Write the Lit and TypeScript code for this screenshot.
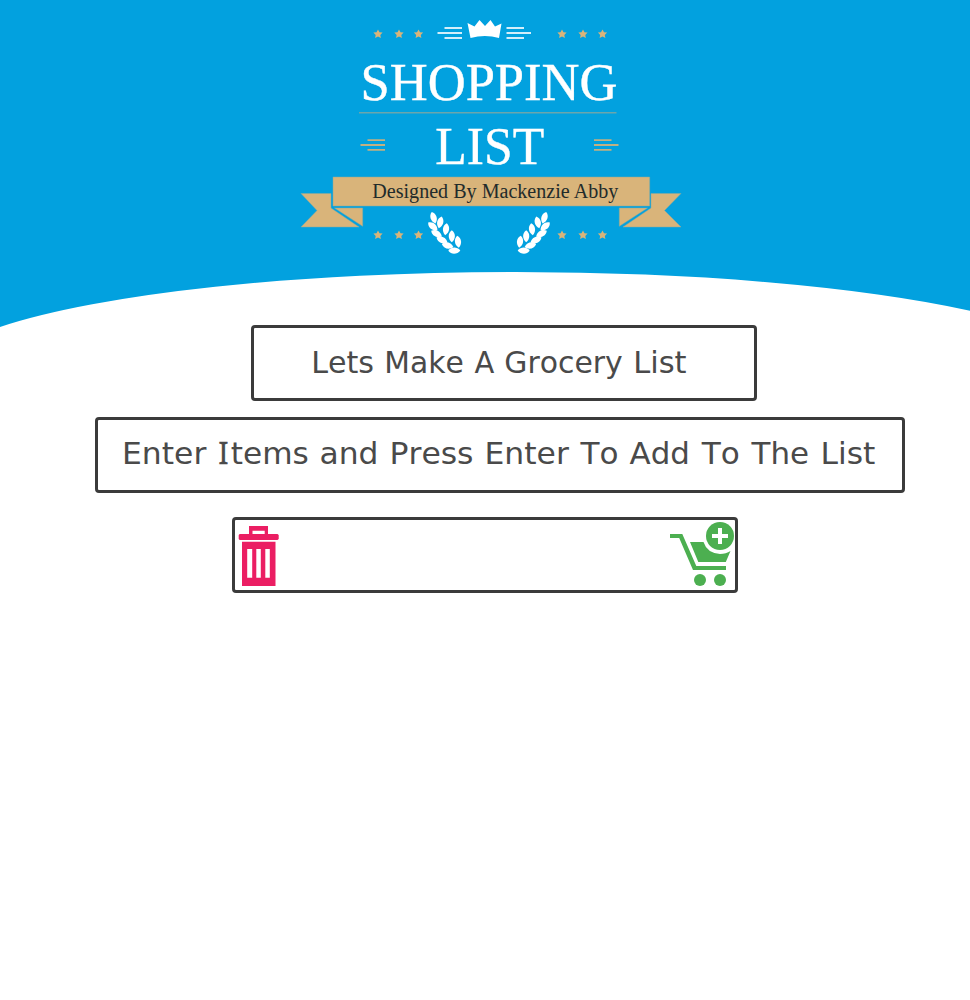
import { LitElement, html, svg, css } from "lit";
import { customElement } from "lit/decorators.js";

const star = (x: number, y: number) => svg`<path fill="#d9b47a" transform="translate(${x} ${y})"
  d="M0-4.4L1.5-1.6L4.6-1.2L2.3 1.1L2.9 4.2L0 2.8L-2.9 4.2L-2.3 1.1L-4.6-1.2L-1.5-1.6Z"/>`;
const leaf = (x: number, y: number, angle: number) => svg`<path
  transform="translate(${x} ${y}) rotate(${angle})" d="M0-6C4.2-3 4 2.8 0 6C-4 2.8-4.2-3 0-6Z"/>`;
const branch = svg`
  ${leaf(433.6, 217.8, -18)}${leaf(440.2, 222.4, 14)}${leaf(432.8, 226.4, -50)}
  ${leaf(446, 229.3, 8)}${leaf(436.5, 233.6, -62)}${leaf(451.8, 236.2, 0)}
  ${leaf(442, 240, -66)}${leaf(458, 241.8, -8)}${leaf(447.6, 245.5, -75)}
  ${leaf(454.3, 250.6, -92)}`;
const word = (text: string, x: number, y: number, width: number) => svg`<text
  x=${x} y=${y} textLength=${width} lengthAdjust="spacingAndGlyphs">${text}</text>`;

@customElement("app-root")
export class AppRoot extends LitElement {
  static styles = css`
    :host { display: block; min-height: 1000px; background: #fff; }
    svg { display: block; }
    .page { display: flex; flex-direction: column; }
    .header { height: 325px; }
    .header svg { overflow: visible; }
    .serif { font-family: "Liberation Serif", serif; }
    .box { box-sizing: border-box; height: 76px; border: 3px solid #3b3b3b; border-radius: 4px; }
    .box text { font: 30px "DejaVu Sans", sans-serif; font-kerning: none; fill: #4a4a4a; }
    .box .cap { font-family: "Noto Sans", sans-serif; font-size: 30.6px; stroke: #4a4a4a; stroke-width: 0.3px; }
    .title { width: 506px; margin-left: 251px; }
    .hint { width: 810px; margin: 16px 0 0 95px; }
    .entry { display: flex; justify-content: space-between; width: 506px; margin: 24px 0 0 232px; }
  `;

  render() {
    return html`<div class="page">
      <header class="header">
        <svg width="970" height="330" viewBox="0 0 970 330">
          <path fill="#02a1df" d="M0 0H970V310.7A585 104 0 0 0 516 272A585 104 0 0 0 0 327Z"/>
          ${[378, 399, 418.5, 562, 583, 602.5].map((x) => svg`${star(x, 33.8)}${star(x, 234.8)}`)}
          <path fill="#fff" d="M467.5 23L474.5 26.5L479.5 20L485 26L490.5 20L495 26.5L501.5 23.5L499 38Q485 34 470.5 38Z"/>
          <path stroke="#d3eefa" stroke-width="2" d="M444.5 28H462M437.5 33H462M444.5 38H462M506.5 28H524M506.5 33H531M506.5 38H524"/>
          <g class="serif" fill="#fff" stroke="#fff" stroke-width=".4" font-size="52.6">
            <text x="360.5" y="100.2" textLength="257" lengthAdjust="spacingAndGlyphs">SHOPPING</text>
            <text x="435.2" y="163.5" textLength="109" lengthAdjust="spacingAndGlyphs">LIST</text>
          </g>
          <path stroke="#6ba6ac" stroke-width="1.6" d="M359 112.8H616.5"/>
          <path stroke="#c1b083" stroke-width="1.8" d="M367.5 140.2H385M360.5 145H385M367.5 149.8H385M594 140.2H611.5M594 145H618.5M594 149.8H611.5"/>
          <g fill="#d9b47a" stroke="#8aab9c" stroke-width=".5">
            <path d="M333 177H649.7V206H333Z"/>
            <path d="M301 193.5H331V208L359 227H301L317 210.5ZM334.5 208H362.7V226.3Z"/>
            <path d="M681 193.5H651V208L623 227H681L664.5 210.5ZM647.5 208H619.3V226.3Z"/>
          </g>
          <text class="serif" x="372.3" y="198.4" font-size="20" fill="#222b2b" textLength="246" lengthAdjust="spacingAndGlyphs">Designed By Mackenzie Abby</text>
          <g fill="#fff">${branch}<g transform="matrix(-1 0 0 1 978 0)">${branch}</g></g>
        </svg>
      </header>
      <section class="box title">
        <svg width="500" height="70" viewBox="254 328 500 70">
          ${word("Lets", 311.2, 373, 62.8)}${word("Make", 384.3, 373, 79.5)}${word("A", 474.5, 373, 19.8)}
          ${word("Grocery", 504.3, 373, 118.5)}${word("List", 633.2, 373, 53.4)}
        </svg>
      </section>
      <section class="box hint">
        <svg width="804" height="70" viewBox="98 420 804 70">
          ${word("Enter", 122, 464, 84.3)}<text class="cap" x="218.2" y="464">I</text>${word("tems", 230.8, 464, 78)}
          ${word("and", 319.5, 464, 59)}${word("Press", 389.5, 464, 84)}${word("Enter", 484.5, 464, 84.3)}
          ${word("To", 580.5, 464, 38)}${word("Add", 629.6, 464, 60.4)}${word("To", 701.8, 464, 38)}
          ${word("The", 751.5, 464, 57.5)}${word("List", 820.5, 464, 54.8)}
        </svg>
      </section>
      <section class="box entry">
        <svg width="60" height="70" viewBox="235 520 60 70">
          <path fill="#eb1e63" fill-rule="evenodd" d="M249 526H268V534H277.5L278.7 535V539L277.5 540H239.7L238.7 539V535L239.7 534H249ZM252.5 530.7V534H264.7V530.7ZM242 541.7H275.5V586H242ZM247.2 549V577.8H252.2V549ZM256.3 549V577.8H260.8V549ZM265.3 549V577.8H269.8V549Z"/>
        </svg>
        <svg width="70" height="70" viewBox="665 520 70 70">
          <g fill="#4caf50">
            <path d="M670 534H682.3L696.3 566H726V570H693L679.2 538H670ZM690 542H703.5Q707 553 720 554Q726 554 730.5 551L725.8 562H698.3Z"/>
            <circle cx="700" cy="580" r="6"/><circle cx="720" cy="580" r="6"/><circle cx="720" cy="536" r="14"/>
          </g>
          <path stroke="#fff" stroke-width="4" d="M712 536H728M720 528V544"/>
        </svg>
      </section>
    </div>`;
  }
}
